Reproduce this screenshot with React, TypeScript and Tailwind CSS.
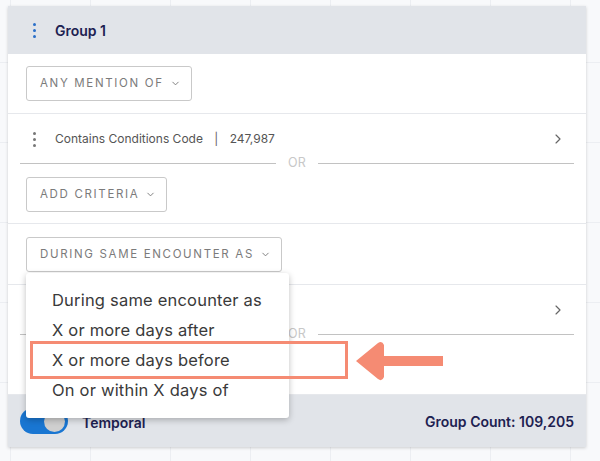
import { ChevronDown, ChevronRight } from 'lucide-react';

const font = { fontFamily: 'Inter, "Open Sans", sans-serif' };

function Kebab({ blue }: { blue?: boolean }) {
  const c = blue ? 'bg-[#2a6fc9]' : 'bg-[#777]';
  return (
    <span className="flex w-[4px] flex-col items-center gap-[3px]">
      <span className={`h-[3px] w-[3px] rounded-full ${c}`} />
      <span className={`h-[3px] w-[3px] rounded-full ${c}`} />
      <span className={`h-[3px] w-[3px] rounded-full ${c}`} />
    </span>
  );
}

function OutlineButton({ label }: { label: string }) {
  return (
    <button
      type="button"
      className="flex h-[35px] items-center gap-[6px] rounded-[3px] border border-[#c9c9c9] bg-white pl-[13px] pr-[10px] text-[11.5px] uppercase tracking-[0.145em] text-[#7b7b7b]"
    >
      {label}
      <ChevronDown size={11} strokeWidth={2} className="text-[#777]" />
    </button>
  );
}

function OrDivider() {
  return (
    <div className="flex h-[26px] items-center gap-[12px] px-[12px]">
      <div className="h-px flex-1 bg-[#c2c2c2]" />
      <span className="text-[12.5px] tracking-wide text-[#c8c8c8]">OR</span>
      <div className="h-px flex-1 bg-[#c2c2c2]" />
    </div>
  );
}

// covered = the part sitting under the open dropdown (not visible in the shot)
function CriteriaRow({ covered }: { covered?: boolean }) {
  return (
    <div className="flex h-[110px] flex-col border-b border-[#e6e8ec] pt-[14px]">
      <div className="flex h-[22px] items-center pl-[24px] pr-[20px]">
        <span className={covered ? 'invisible flex items-center' : 'flex items-center'}>
          <Kebab />
          <span className="ml-[19px] text-[12px] text-[#555]">
            Contains Conditions Code <span className="mx-[8px] text-[#666]">|</span> 247,987
          </span>
        </span>
        <ChevronRight size={16} strokeWidth={1.75} className="ml-auto text-[#666]" />
      </div>
      <OrDivider />
      <div className={covered ? 'invisible pl-[18px] pt-[1px]' : 'pl-[18px] pt-[1px]'}>
        <OutlineButton label="Add Criteria" />
      </div>
    </div>
  );
}

const options = [
  'During same encounter as',
  'X or more days after',
  'X or more days before',
  'On or within X days of',
];

export default function App() {
  return (
    <div
      style={font}
      className="h-[461px] w-[600px] overflow-hidden bg-[#f8f9fb] bg-[linear-gradient(to_right,#eceef2_1px,transparent_1px),linear-gradient(to_bottom,#eceef2_1px,transparent_1px)] bg-[size:80px_80px] bg-[position:10px_62px] pl-[8px] pt-[6px]"
    >
      <div className="relative w-[578px] bg-white shadow-[0_1px_3px_rgba(0,0,0,0.18)]">
        <header className="flex h-[48px] items-center bg-[#e1e4e9] pl-[24px]">
          <Kebab blue />
          <span className="ml-[19px] text-[14px] font-semibold text-[#1d2151]">Group 1</span>
        </header>

        <div className="flex h-[60px] items-start border-b border-[#e6e8ec] pl-[18px] pt-[12px]">
          <OutlineButton label="Any Mention Of" />
        </div>

        <CriteriaRow />

        <div className="flex h-[61px] items-start border-b border-[#e6e8ec] pl-[18px] pt-[13px]">
          <OutlineButton label="During Same Encounter As" />
        </div>

        <CriteriaRow covered />

        <footer className="flex h-[52px] items-center bg-[#e1e4e9] pl-[12px] pr-[12px]">
          <span className="flex h-[26px] w-[48px] items-center justify-end rounded-full bg-[#1976d2] pr-[3px]">
            <span className="h-[21px] w-[21px] rounded-full bg-[#cfcfcf]" />
          </span>
          <span className="ml-[14px] mt-[2px] text-[14px] font-semibold text-[#1d2151]">Temporal</span>
          <span className="ml-auto text-[14px] font-semibold text-[#1d2151]">Group Count: 109,205</span>
        </footer>

        <ul className="absolute left-[18px] top-[267px] w-[263px] rounded-[3px] bg-white pb-[13px] pt-[12px] shadow-[0_2px_6px_rgba(0,0,0,0.25)]">
          {options.map((o) => (
            <li key={o} className="flex h-[30px] items-center pl-[26px] text-[16.5px] tracking-[0.012em] text-[#3a3a3a]">
              {o}
            </li>
          ))}
        </ul>

        <div className="absolute left-[22px] top-[335px] h-[38px] w-[318px] border-[3px] border-[#f58b73]" />
        <svg className="absolute left-[340px] top-[334px]" width="98" height="42" viewBox="0 0 98 42">
          <path
            d="M8 21 L30 3 Q34 0 36 5 L36 16 L95 16 L95 26 L36 26 L36 37 Q34 42 30 39 Z"
            fill="#f58b73"
          />
        </svg>
      </div>
    </div>
  );
}
